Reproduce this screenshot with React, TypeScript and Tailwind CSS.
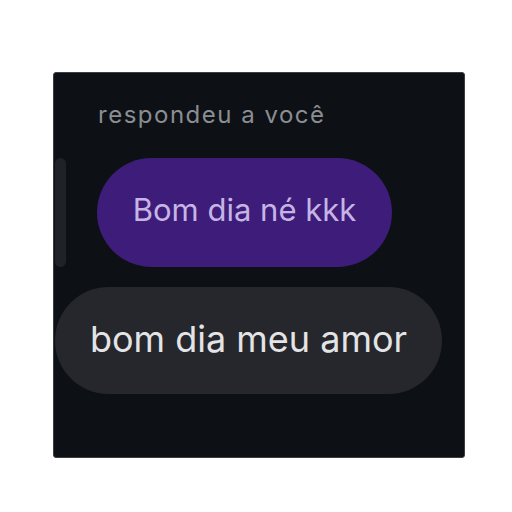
import React from "react";

export default function App() {
  return (
    <div className="w-[512px] h-[512px] bg-white pt-[72px] pl-[53px]" style={{ fontFamily: "Inter, 'Noto Sans', sans-serif" }}>
      <div className="w-[412px] h-[386px] bg-[#0d1115] border border-[#3b3e42] rounded-[3px] flex flex-col">
        <div className="pl-[44px] pt-[27px] text-[24px] leading-[30px] tracking-[1.5px] text-[#8b8e92]">respondeu a você</div>
        <div className="flex mt-[28px] relative">
          <div className="absolute left-[1px] top-0 w-[11px] h-[109px] rounded-full bg-[#1f2227]" />
          <div className="ml-[43px] w-[295px] h-[109px] rounded-full bg-[#3e1c7a] flex items-center justify-center pb-[4px] text-[31px] text-[#c6b5e4]">
            Bom dia né kkk
          </div>
        </div>
        <div className="mt-[20px] ml-[1px] w-[387px] h-[107px] rounded-full bg-[#25272c] flex items-center justify-center pb-[4px] text-[36px] text-[#e4e4e6]">
          bom dia meu amor
        </div>
      </div>
    </div>
  );
}
